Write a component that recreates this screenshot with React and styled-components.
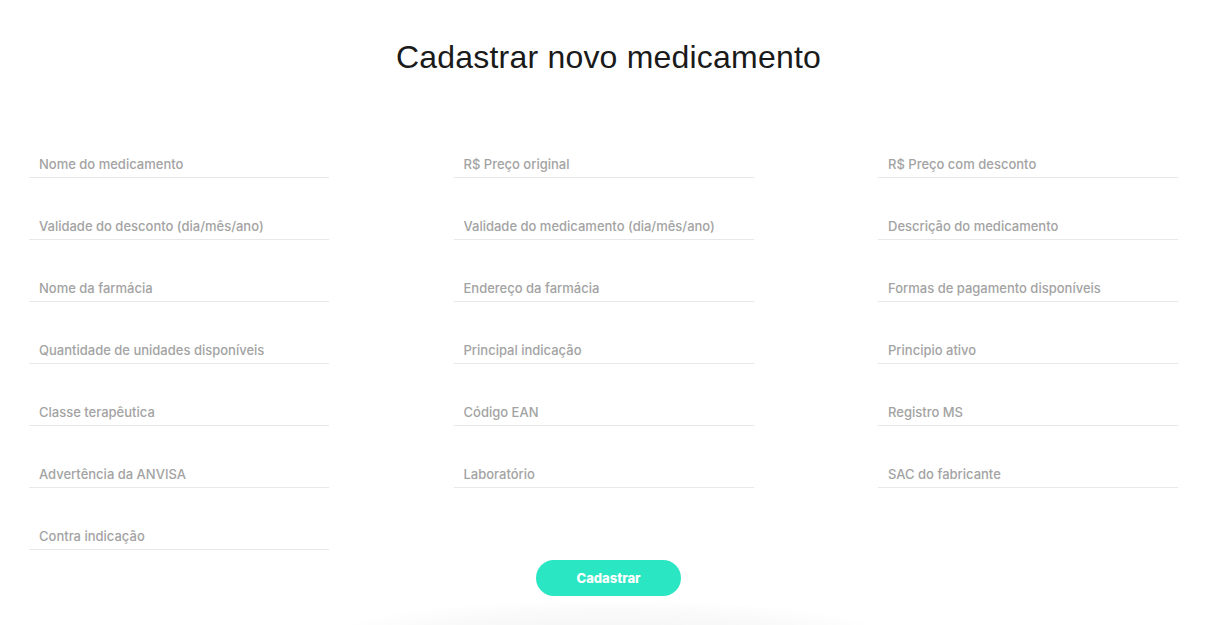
import React from 'react';
import styled, { createGlobalStyle } from 'styled-components';

const GlobalStyle = createGlobalStyle`
  body {
    margin: 0;
    background: #fff;
    font-family: "Helvetica Neue", "Liberation Sans", Arial, sans-serif;
  }`;

const Page = styled.div`
  width: 1217px;
  height: 625px;
  overflow: hidden;
  position: relative;
  display: flex;
  flex-direction: column;
  align-items: center;`;

const Title = styled.h1`
  margin: 38px 0 0;
  font-size: 32px;
  font-weight: 300;
  line-height: 38px;
  color: #1a1a1a;
  letter-spacing: 0.2px;`;

const Form = styled.form`
  align-self: stretch;
  display: flex;
  flex-direction: column;
  align-items: center;`;

const Fields = styled.div`
  align-self: stretch;
  display: grid;
  grid-template-columns: repeat(3, 300px);
  column-gap: 124.5px;
  row-gap: 34px;
  padding: 0 0 0 29px;
  margin-top: 74px;`;

const Input = styled.input`
  width: 300px;
  height: 28px;
  box-sizing: border-box;
  border: none;
  border-bottom: 1px solid #e6e8eb;
  padding: 0 10px;
  font-family: Inter, "Liberation Sans", Arial, sans-serif;
  font-size: 13px;
  font-weight: 500;
  color: #333;
  outline: none;
  background: transparent;

  &::placeholder {
    color: #a3a3a3;
  }`;

const Button = styled.button`
  margin-top: 10px;
  width: 145px;
  height: 36px;
  border: none;
  border-radius: 18px;
  background: #2ae6c3;
  color: #fff;
  font-family: Inter, "Liberation Sans", Arial, sans-serif;
  font-weight: 800;
  font-size: 13px;
  cursor: pointer;
  position: relative;
  z-index: 1;`;

const Glow = styled.div`
  position: absolute;
  left: 330px;
  top: 600px;
  width: 560px;
  height: 70px;
  border-radius: 50%;
  background: radial-gradient(ellipse at center, rgba(0,0,0,0.04) 0%, rgba(0,0,0,0.025) 45%, rgba(0,0,0,0) 72%);`;

const fields = [
  'Nome do medicamento',
  'R$ Preço original',
  'R$ Preço com desconto',
  'Validade do desconto (dia/mês/ano)',
  'Validade do medicamento (dia/mês/ano)',
  'Descrição do medicamento',
  'Nome da farmácia',
  'Endereço da farmácia',
  'Formas de pagamento disponíveis',
  'Quantidade de unidades disponíveis',
  'Principal indicação',
  'Principio ativo',
  'Classe terapêutica',
  'Código EAN',
  'Registro MS',
  'Advertência da ANVISA',
  'Laboratório',
  'SAC do fabricante',
  'Contra indicação',
];

const App = () => {
  return (
    <>
      <GlobalStyle />
      <Page>
        <Title>Cadastrar novo medicamento</Title>
        <Form onSubmit={(e) => e.preventDefault()}>
          <Fields>
            {fields.map((f) => (
              <Input key={f} placeholder={f} />
            ))}
          </Fields>
          <Button type="submit">Cadastrar</Button>
        </Form>
        <Glow />
      </Page>
    </>
  );
};

export default App;
